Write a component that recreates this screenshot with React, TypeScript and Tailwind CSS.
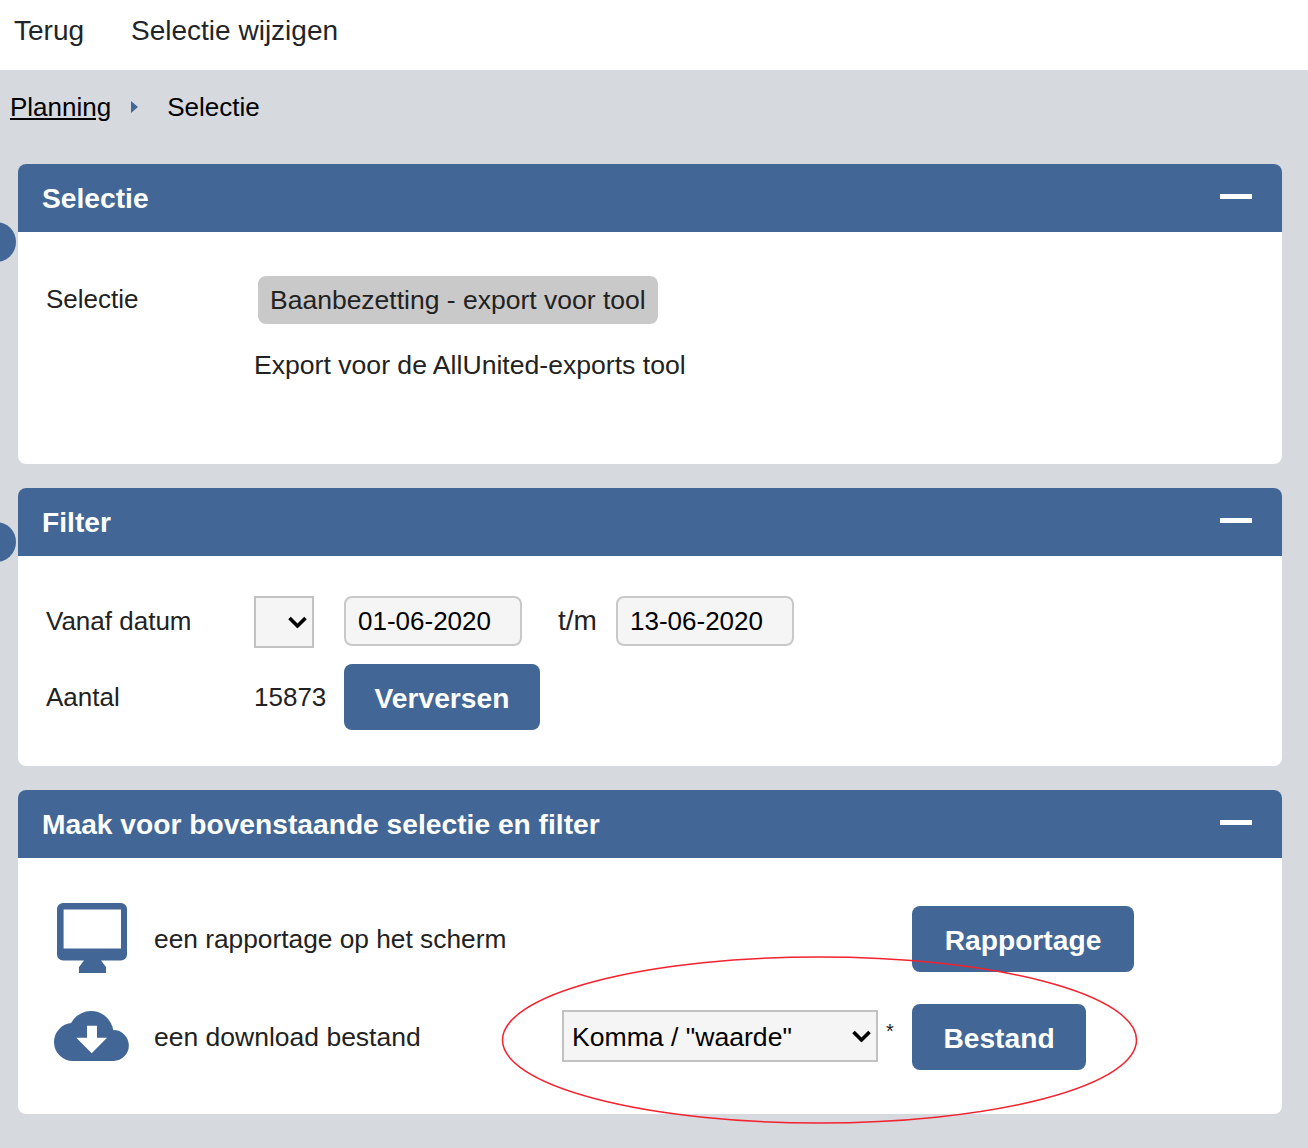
import React from 'react';

const BLUE = 'bg-[#426796]';

function Panel({ title, bodyClass, children }: { title: string; bodyClass: string; children: React.ReactNode }) {
  return (
    <section className="rounded-lg overflow-hidden bg-white">
      <header className={`${BLUE} h-[68px] flex items-center justify-between pl-6 pr-[30px]`}>
        <h2 className="text-[28.2px] font-bold text-white leading-none pt-[1px]">{title}</h2>
        <span className="block w-8 h-[5px] bg-white mb-[4px]" />
      </header>
      <div className={bodyClass}>{children}</div>
    </section>
  );
}

function Button({ label, className }: { label: string; className: string }) {
  return (
    <button type="button" className={`${BLUE} ${className} h-[66px] pt-[2px] rounded-lg text-white font-bold text-[28.2px] leading-none`}>
      {label}
    </button>
  );
}

function FakeSelect({ label, className }: { label?: string; className: string }) {
  return (
    <div className={`${className} relative border-2 border-[#c2c2c2] bg-[#f5f5f5] flex items-center pl-2 pt-[4px] text-black text-[26.6px]`}>
      {label}
      <svg className="absolute right-[5px] top-1/2 -translate-y-1/2" width="19" height="13" viewBox="0 0 19 13">
        <path d="M1.500 2.500l8 8 8-8" fill="none" stroke="#000" strokeWidth="3.6" />
      </svg>
    </div>
  );
}

function DateInput({ value }: { value: string }) {
  return (
    <input
      readOnly
      value={value}
      className="w-[178px] h-[50px] border-2 border-[#c8c8c8] rounded-lg bg-[#f5f5f5] px-3 text-black text-[26px] outline-none"
    />
  );
}

export default function App() {
  return (
    <div className="relative min-h-[1148px] bg-[#d6d9de] text-[26px] text-[#222] font-['Liberation_Sans',Arial,sans-serif] overflow-hidden">
      {/* Top nav */}
      <nav className="h-[70px] bg-white flex items-center gap-[47px] pl-[14px] pb-[8px] text-[28px] text-[#212529]">
        <span>Terug</span>
        <span>Selectie wijzigen</span>
      </nav>

      {/* Breadcrumb */}
      <div className="h-[74px] flex items-center pl-[10px] text-black">
        <a className="underline">Planning</a>
        <svg className="ml-[20px] mr-[29px]" width="7" height="12" viewBox="0 0 7 12">
          <path d="M0 0l7 6-7 6z" fill="#426796" />
        </svg>
        <span>Selectie</span>
      </div>

      <main className="relative mt-[20px] ml-[18px] mr-[26px] flex flex-col gap-6">
        <Panel title="Selectie" bodyClass="h-[232px] pt-[44px] pl-[28px]">
          <div className="flex items-center">
            <span className="w-[212px] mb-[2px]">Selectie</span>
            <span className="h-12 flex items-center rounded-lg bg-[#c9c9c9] px-3 pt-[2px] text-[26.5px] text-[#222]">Baanbezetting - export voor tool</span>
          </div>
          <p className="mt-[23px] ml-[208px] leading-[36px] text-[26.6px]">Export voor de AllUnited-exports tool</p>
        </Panel>

        <Panel title="Filter" bodyClass="h-[210px] pt-[40px] pl-[28px]">
          <div className="flex items-start">
            <span className="w-[208px] h-[52px] leading-[50px]">Vanaf datum</span>
            <FakeSelect className="w-[60px] h-[52px]" />
            <div className="ml-[30px]"><DateInput value="01-06-2020" /></div>
            <span className="w-[94px] pl-[36px] leading-[50px] text-[28px]">t/m</span>
            <DateInput value="13-06-2020" />
          </div>
          <div className="flex items-center mt-[16px]">
            <span className="w-[208px]">Aantal</span>
            <span className="w-[90px]">15873</span>
            <Button label="Verversen" className="w-[196px]" />
          </div>
        </Panel>

        <Panel title="Maak voor bovenstaande selectie en filter" bodyClass="h-[256px] pl-[39px]">
          <div className="flex items-center pt-[48px] h-[114px]">
            <svg className="w-[70px] h-[70px] mt-[-2px]" viewBox="0 0 70 70">
              <path
                fillRule="evenodd"
                fill="#426796"
                d="M6 0h58a6 6 0 0 1 6 6v45.500a6 6 0 0 1-6 6H44l5 6.500v6H22v-6l5-6.500H6a6 6 0 0 1-6-6V6a6 6 0 0 1 6-6zM6.600 6.600v39h57.400v-39z"
              />
            </svg>
            <span className="ml-[27px] w-[758px] pt-[2px] text-[26.3px]">een rapportage op het scherm</span>
            <Button label="Rapportage" className="w-[222px]" />
          </div>
          <div className="flex items-center mt-[32px] h-[66px]">
            <svg className="w-[75px] h-[50px] ml-[-3px] mb-[2px]" viewBox="0 0 75 50">
              <path
                fillRule="evenodd"
                fill="#426796"
                d="M19 50A19 19 0 0 1 17.060 12.100A22.500 22.500 0 0 1 59.200 19A15.500 15.500 0 0 1 59.500 50zM33 14.700v12H22.300l15.400 15.600L53 26.700H43v-12z"
              />
            </svg>
            <span className="ml-[25px] w-[408px] pt-[2px] text-[26.5px]">een download bestand</span>
            <FakeSelect label={'Komma / "waarde"'} className="w-[316px] h-[52px] mb-[2px]" />
            <span className="w-[34px] pl-2 text-[20px] self-start mt-[12px]">*</span>
            <Button label="Bestand" className="w-[174px]" />
          </div>
        </Panel>
      </main>

      {/* Side tabs peeking out next to the panels */}
      <span className={`absolute ${BLUE} left-[-24px] top-[222px] w-10 h-10 rounded-full`} />
      <span className={`absolute ${BLUE} left-[-24px] top-[522px] w-10 h-10 rounded-full`} />

      {/* Hand-drawn annotation */}
      <svg className="absolute left-[500px] top-[955px] pointer-events-none" width="640" height="170" viewBox="0 0 640 170">
        <ellipse cx="319.500" cy="85" rx="317" ry="83" fill="none" stroke="#f4222f" strokeWidth="1.5" />
      </svg>
    </div>
  );
}
